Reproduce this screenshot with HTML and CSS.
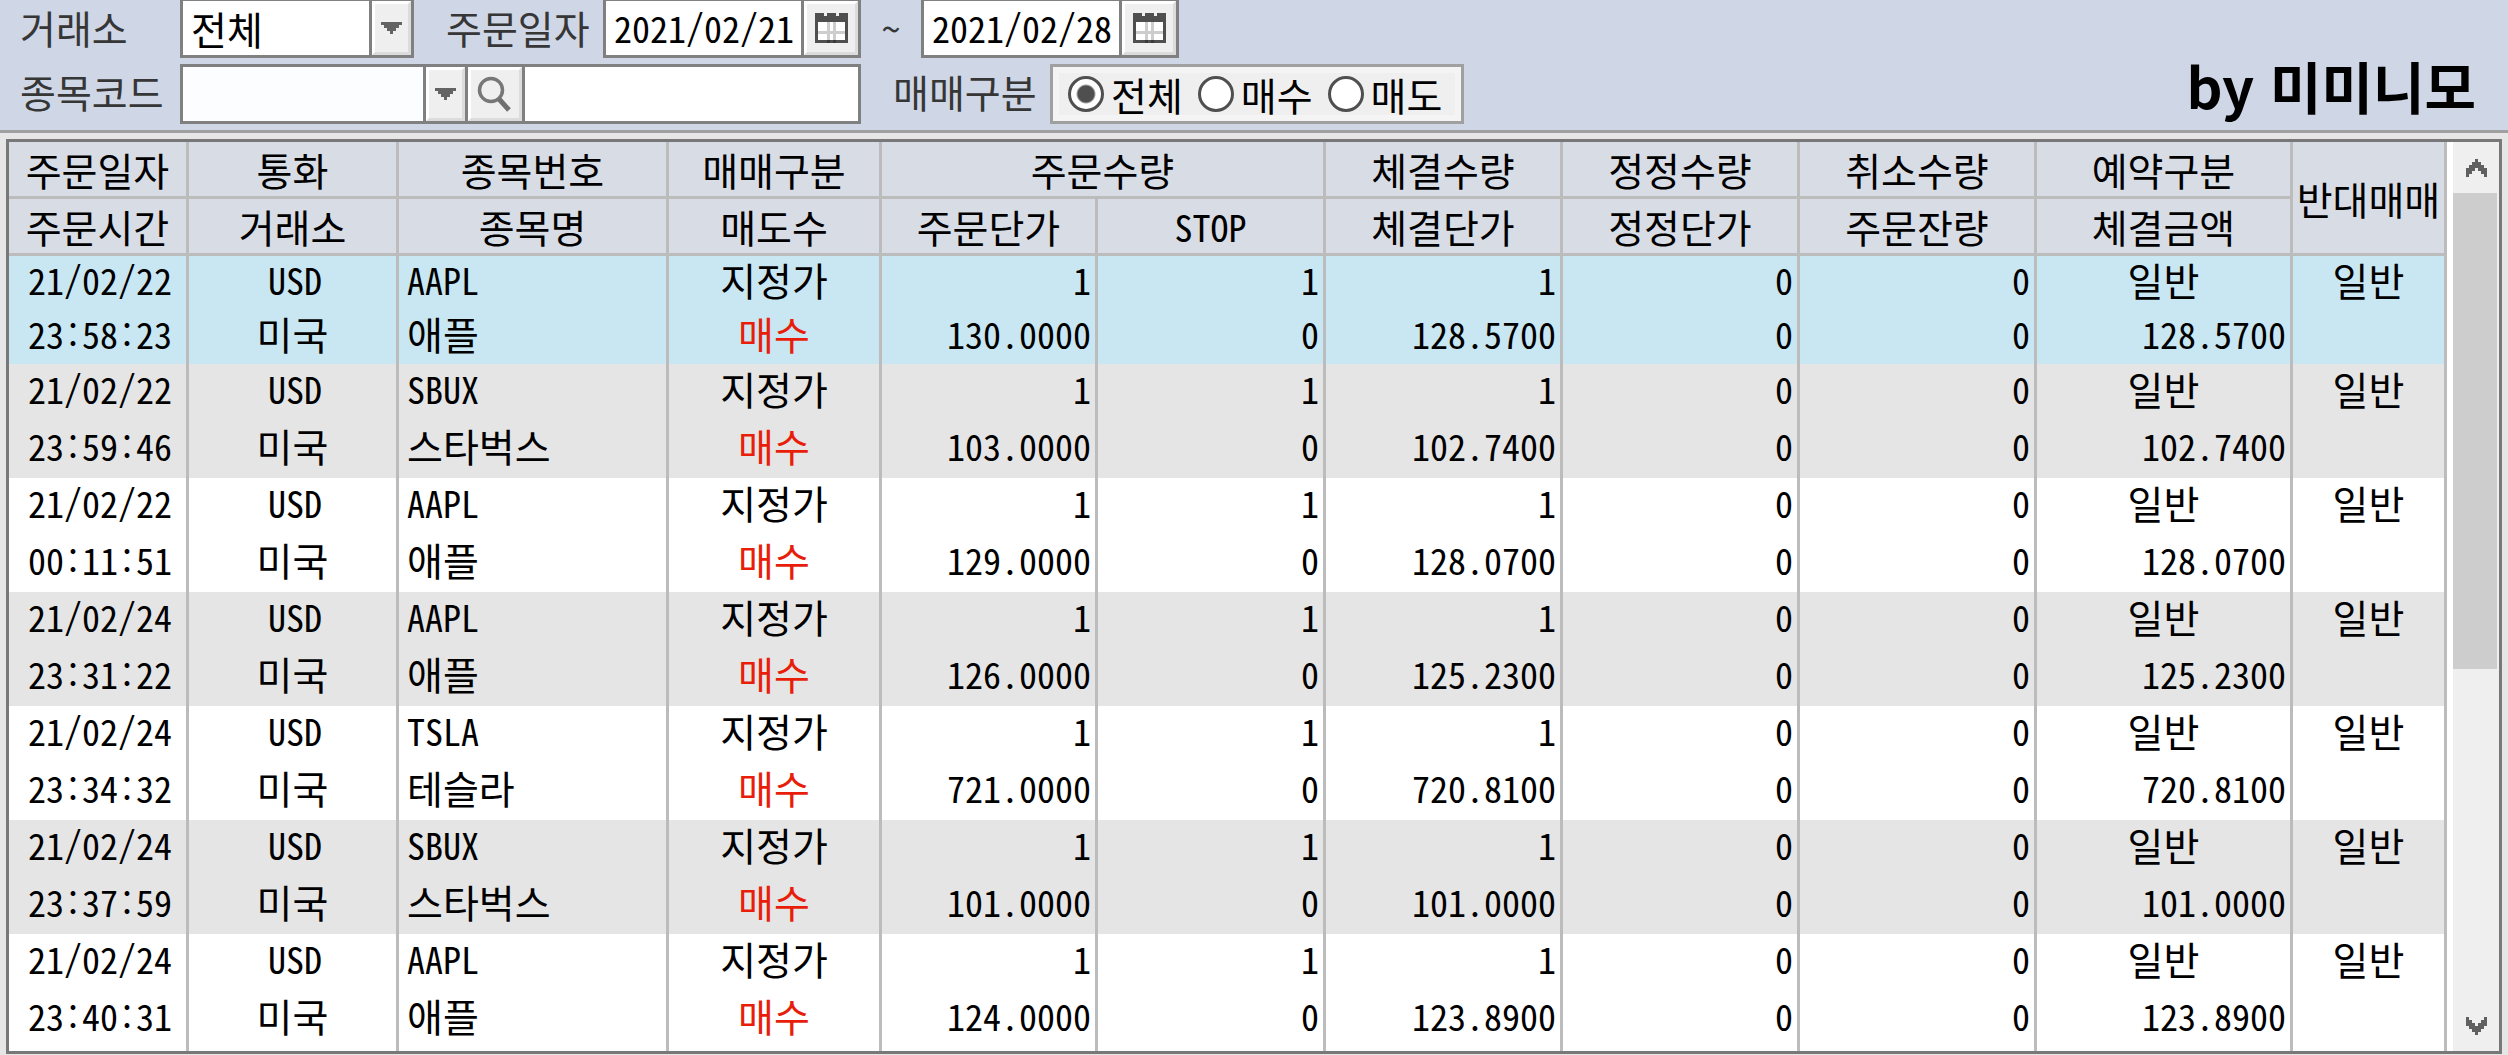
FILE: index.html
```html
<!DOCTYPE html>
<html lang="ko">
<head>
<meta charset="utf-8">
<title>해외주식 주문체결내역</title>
<link rel="stylesheet" href="styles.css">
</head>
<body>
<svg class="defs" aria-hidden="true">
  <symbol id="calendar" viewBox="0 0 33 30">
    <path fill="#fff" d="M3 9h27v18H3z"/>
    <path fill="#cdcdcd" d="M12 9h3v18h-3zM18 9h3v18h-3zM3 18h27v3H3z"/>
    <path fill="#4f4f4f" d="M0 0h9v3h3V0h9v3h3V0h9v30H0V0zM3 9v18h27V9z" fill-rule="evenodd"/>
    <path fill="#3a3a3a" d="M12 27h3v3h-3zM18 27h3v3h-3z"/>
  </symbol>
  <symbol id="arrow" viewBox="0 0 21 12">
    <path fill="#636363" d="M0 0h21v3h-3v3h-3v3h-3v3H9V9H6V6H3V3H0z"/>
  </symbol>
  <symbol id="search" viewBox="0 0 36 36">
    <circle cx="14" cy="14" r="11.5" fill="none" stroke="#777" stroke-width="3.5"/>
    <path d="M22 23l10 11" stroke="#707070" stroke-width="5" fill="none"/>
  </symbol>
  <symbol id="chevron" viewBox="0 0 21 18">
    <path fill="#606060" d="M9 0h3v3h3v3h3v3h3v9h-3v-3h-3v-3h-3V9H9v3H6v3H3v3H0V9h3V6h3V3h3z"/>
  </symbol>
</svg>

<form class="toolbar">
  <div class="line">
    <label class="name first" for="market">거래소</label>
    <div class="field market">
      <select id="market"><option>전체</option></select>
      <span class="key narrow"><svg class="i-arrow"><use href="#arrow"/></svg></span>
    </div>
    <label class="name" for="from">주문일자</label>
    <div class="field date">
      <input id="from" type="text" value="2021/02/21">
      <button type="button" class="key" aria-label="시작일 달력"><svg class="i-cal"><use href="#calendar"/></svg></button>
    </div>
    <span class="tilde">~</span>
    <div class="field date">
      <input id="to" type="text" value="2021/02/28" aria-label="종료일">
      <button type="button" class="key" aria-label="종료일 달력"><svg class="i-cal"><use href="#calendar"/></svg></button>
    </div>
  </div>
  <div class="line second">
    <label class="name first" for="code">종목코드</label>
    <div class="field stock">
      <input id="code" class="code" type="text">
      <button type="button" class="key narrow" aria-label="최근 종목"><svg class="i-arrow"><use href="#arrow"/></svg></button>
      <button type="button" class="key" aria-label="종목 검색"><svg class="i-search"><use href="#search"/></svg></button>
      <input class="stock-name" type="text" aria-label="종목명">
    </div>
    <span class="name" id="side">매매구분</span>
    <div class="choices" role="radiogroup" aria-labelledby="side">
      <label><input type="radio" name="side" checked>전체</label>
      <label><input type="radio" name="side">매수</label>
      <label><input type="radio" name="side">매도</label>
    </div>
    <span class="author">by 미미니모</span>
  </div>
</form>

<main class="grid">
  <table>
    <colgroup>
      <col class="c1"><col class="c2"><col class="c3"><col class="c4"><col class="c5"><col class="c6">
      <col class="c7"><col class="c7"><col class="c7"><col class="c10"><col class="c11">
    </colgroup>
    <thead>
      <tr><th>주문일자</th><th>통화</th><th>종목번호</th><th>매매구분</th><th colspan="2">주문수량</th><th>체결수량</th><th>정정수량</th><th>취소수량</th><th>예약구분</th><th rowspan="2">반대매매</th></tr>
      <tr><th>주문시간</th><th>거래소</th><th>종목명</th><th>매도수</th><th>주문단가</th><th class="latin">STOP</th><th>체결단가</th><th>정정단가</th><th>주문잔량</th><th>체결금액</th></tr>
    </thead>
    <tbody class="selected">
      <tr><td class="t">21/02/22</td><td class="t">USD</td><td class="l">AAPL</td><td class="k">지정가</td><td class="r">1</td><td class="r">1</td><td class="r">1</td><td class="r">0</td><td class="r">0</td><td class="k">일반</td><td class="k">일반</td></tr>
      <tr><td class="t">23:58:23</td><td class="k">미국</td><td class="l k">애플</td><td class="k buy">매수</td><td class="r">130.0000</td><td class="r">0</td><td class="r">128.5700</td><td class="r">0</td><td class="r">0</td><td class="r">128.5700</td><td></td></tr>
    </tbody>
    <tbody class="shade">
      <tr><td class="t">21/02/22</td><td class="t">USD</td><td class="l">SBUX</td><td class="k">지정가</td><td class="r">1</td><td class="r">1</td><td class="r">1</td><td class="r">0</td><td class="r">0</td><td class="k">일반</td><td class="k">일반</td></tr>
      <tr><td class="t">23:59:46</td><td class="k">미국</td><td class="l k">스타벅스</td><td class="k buy">매수</td><td class="r">103.0000</td><td class="r">0</td><td class="r">102.7400</td><td class="r">0</td><td class="r">0</td><td class="r">102.7400</td><td></td></tr>
    </tbody>
    <tbody>
      <tr><td class="t">21/02/22</td><td class="t">USD</td><td class="l">AAPL</td><td class="k">지정가</td><td class="r">1</td><td class="r">1</td><td class="r">1</td><td class="r">0</td><td class="r">0</td><td class="k">일반</td><td class="k">일반</td></tr>
      <tr><td class="t">00:11:51</td><td class="k">미국</td><td class="l k">애플</td><td class="k buy">매수</td><td class="r">129.0000</td><td class="r">0</td><td class="r">128.0700</td><td class="r">0</td><td class="r">0</td><td class="r">128.0700</td><td></td></tr>
    </tbody>
    <tbody class="shade">
      <tr><td class="t">21/02/24</td><td class="t">USD</td><td class="l">AAPL</td><td class="k">지정가</td><td class="r">1</td><td class="r">1</td><td class="r">1</td><td class="r">0</td><td class="r">0</td><td class="k">일반</td><td class="k">일반</td></tr>
      <tr><td class="t">23:31:22</td><td class="k">미국</td><td class="l k">애플</td><td class="k buy">매수</td><td class="r">126.0000</td><td class="r">0</td><td class="r">125.2300</td><td class="r">0</td><td class="r">0</td><td class="r">125.2300</td><td></td></tr>
    </tbody>
    <tbody>
      <tr><td class="t">21/02/24</td><td class="t">USD</td><td class="l">TSLA</td><td class="k">지정가</td><td class="r">1</td><td class="r">1</td><td class="r">1</td><td class="r">0</td><td class="r">0</td><td class="k">일반</td><td class="k">일반</td></tr>
      <tr><td class="t">23:34:32</td><td class="k">미국</td><td class="l k">테슬라</td><td class="k buy">매수</td><td class="r">721.0000</td><td class="r">0</td><td class="r">720.8100</td><td class="r">0</td><td class="r">0</td><td class="r">720.8100</td><td></td></tr>
    </tbody>
    <tbody class="shade">
      <tr><td class="t">21/02/24</td><td class="t">USD</td><td class="l">SBUX</td><td class="k">지정가</td><td class="r">1</td><td class="r">1</td><td class="r">1</td><td class="r">0</td><td class="r">0</td><td class="k">일반</td><td class="k">일반</td></tr>
      <tr><td class="t">23:37:59</td><td class="k">미국</td><td class="l k">스타벅스</td><td class="k buy">매수</td><td class="r">101.0000</td><td class="r">0</td><td class="r">101.0000</td><td class="r">0</td><td class="r">0</td><td class="r">101.0000</td><td></td></tr>
    </tbody>
    <tbody class="last">
      <tr><td class="t">21/02/24</td><td class="t">USD</td><td class="l">AAPL</td><td class="k">지정가</td><td class="r">1</td><td class="r">1</td><td class="r">1</td><td class="r">0</td><td class="r">0</td><td class="k">일반</td><td class="k">일반</td></tr>
      <tr><td class="t">23:40:31</td><td class="k">미국</td><td class="l k">애플</td><td class="k buy">매수</td><td class="r">124.0000</td><td class="r">0</td><td class="r">123.8900</td><td class="r">0</td><td class="r">0</td><td class="r">123.8900</td><td></td></tr>
    </tbody>
  </table>
  <div class="scroll">
    <button type="button" aria-label="위로"><svg><use href="#chevron"/></svg></button>
    <div class="track"><div class="thumb"></div></div>
    <button type="button" class="down" aria-label="아래로"><svg><use href="#chevron"/></svg></button>
  </div>
</main>
</body>
</html>
```
FILE: styles.css
```css
* {
  box-sizing: border-box;
}

body {
  margin: 0;
  min-height: 100vh;
  display: flex;
  flex-direction: column;
  background: #e6e6e6;
  color: #000;
}

body,
input,
select,
button {
  font: 36px/54px "Noto Sans Mono CJK KR", "Noto Sans CJK KR", sans-serif;
}

svg {
  display: block;
}

.defs {
  display: none;
}

/* Search conditions */
.toolbar {
  background: #cfd6e6;
  border-bottom: 3px solid #a0a0a0;
}

.line {
  display: flex;
  height: 58px;
}

.second {
  height: 60px;
  margin: 6px 0;
}

.name {
  width: 189px;
  padding-left: 32px;
  color: #363636;
  font-size: 39px;
  white-space: nowrap;
}

.name.first {
  width: 180px;
  padding-left: 20px;
}

.tilde {
  width: 60px;
  text-align: center;
  color: #363636;
}

.field {
  display: flex;
  background: #fff;
  border: 3px solid #808080;
  border-top-width: 1px;
}

.market {
  width: 234px;
}

.date {
  width: 258px;
}

.stock {
  width: 681px;
  border-top-width: 3px;
}

.field input,
.field select {
  flex: 1;
  min-width: 0;
  margin: 0;
  padding: 0 0 3px 8px;
  border: 0;
  border-radius: 0;
  outline: 0;
  background: #fff;
  color: #000;
  appearance: none;
}

.field select {
  font-size: 39px;
}

.field .code {
  flex: 0 0 240px;
  background: #fbfdff;
}

.key {
  flex: none;
  width: 57px;
  padding: 0;
  display: grid;
  place-items: center;
  background: #efefef;
  border: 3px solid;
  border-color: #fff #dcdcdc #dcdcdc #fff;
  outline: 0;
  margin-left: 3px;
  box-shadow: -3px 0 #808080;
}

.date .key {
  width: 54px;
}

.narrow {
  width: 39px;
}

.stock .key + .key {
  width: 54px;
  box-shadow: -3px 0 #808080, 3px 0 #808080;
  margin-right: 3px;
  z-index: 1;
}

.i-arrow {
  width: 21px;
  height: 12px;
}

.i-cal {
  width: 33px;
  height: 30px;
}

.i-search {
  width: 36px;
  height: 36px;
}

.choices {
  display: flex;
  gap: 15px;
  width: 414px;
  padding: 0 15px;
  background: #efefef;
  border: 3px solid #a0a0a0;
  box-shadow: inset 0 0 0 6px #f4f4f4;
  font-size: 39px;
}

.choices label {
  display: flex;
  align-items: center;
  gap: 7px;
  white-space: nowrap;
}

.choices input {
  flex: none;
  width: 36px;
  height: 36px;
  margin: 0;
  appearance: none;
  border: 3px solid #4f4f4f;
  border-radius: 50%;
  background: #fff;
}

.choices input:checked {
  background: radial-gradient(circle, #4f4f4f 8px, #fff 10px);
}

.author {
  margin-left: auto;
  padding-right: 32px;
  font: 700 56px/42px "Noto Sans CJK KR", sans-serif;
  white-space: nowrap;
}

/* Order list */
.grid {
  flex: 1;
  display: flex;
  align-items: stretch;
  margin: 6px 6px 1px;
  border: 3px solid #787878;
  background: #fff;
}

table {
  flex: 1;
  min-width: 0;
  table-layout: fixed;
  border-collapse: separate;
  border-spacing: 0;
}

.c1 { width: 180px; }
.c2 { width: 210px; }
.c3 { width: 270px; }
.c4 { width: 213px; }
.c5 { width: 216px; }
.c6 { width: 228px; }
.c7 { width: 237px; }
.c10 { width: 256px; }
.c11 { width: 154px; }

th,
td {
  padding: 0;
  border-right: 3px solid #bcbcbc;
  text-align: center;
  white-space: nowrap;
}

th {
  height: 57px;
  background: #d8dce5;
  border-bottom: 3px solid #bcbcbc;
  font-size: 39px;
  font-weight: 400;
  line-height: 48px;
}

th.latin {
  font-size: 36px;
}

td {
  height: 57px;
  padding-bottom: 9px;
  line-height: 42px;
  vertical-align: middle;
}

td.k {
  font-size: 39px;
}

td.t {
  padding-left: 5px;
}

.selected td {
  height: 54px;
  background: #c9e7f2;
}

.shade td {
  background: #e5e5e5;
}

.last tr + tr td {
  height: 60px;
  padding-bottom: 12px;
}

td.l {
  padding-left: 8px;
  text-align: left;
}

td.r {
  padding-right: 4px;
  text-align: right;
}

td.buy {
  color: #e81e0a;
}

.scroll {
  flex: none;
  width: 52px;
  display: flex;
  flex-direction: column;
  border-left: 6px solid #fff;
  background: #efefef;
}

.scroll button {
  height: 51px;
  padding: 0;
  display: grid;
  place-items: center;
  border: 0;
  background: none;
}

.scroll svg {
  width: 21px;
  height: 18px;
}

.down svg {
  transform: rotate(180deg);
}

.track {
  flex: 1;
}

.thumb {
  height: 59%;
  margin-right: 2px;
  background: #cdcdcd;
}
```
